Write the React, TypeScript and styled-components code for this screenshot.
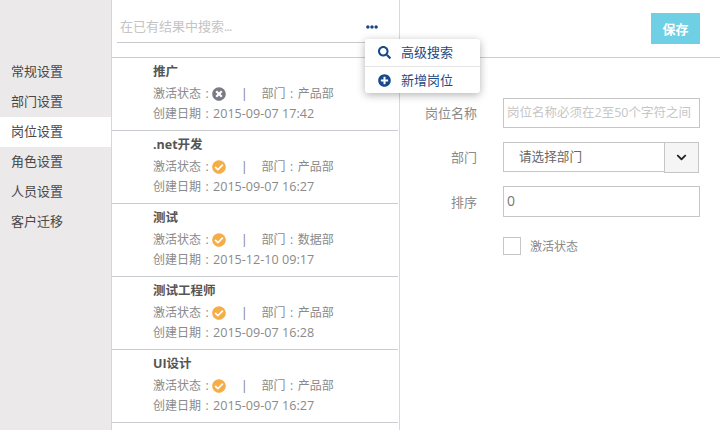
import React from 'react';
import styled, { createGlobalStyle } from 'styled-components';
import { FaCheckCircle, FaChevronDown, FaEllipsisH, FaPlusCircle, FaSearch, FaTimesCircle } from 'react-icons/fa';

const GlobalStyle = createGlobalStyle`
  html, body {
    margin: 0;
    padding: 0;
    height: 100%;
    overflow: hidden;
    background: #fff;
  }
  * {
    box-sizing: border-box;
  }
  body {
    font-family: "Open Sans", "Noto Sans CJK SC", sans-serif;
    font-size: 13px;
    color: #8a8a8a;
  }
`;

const Page = styled.div`
  display: grid;
  grid-template-columns: 112px 288px 1fr;
  width: 720px;
  height: 430px;
  overflow: hidden;
`;

const Sidebar = styled.nav`
  background: #ebe9ea;
  border-right: 1px solid #cfd8e0;
  padding-top: 57px;
`;

const NavItem = styled.div<{ $active?: boolean }>`
  height: 30px;
  line-height: 28px;
  padding-left: 11px;
  color: #484848;
  background: ${props => (props.$active ? '#fff' : 'transparent')};
`;

const ListPanel = styled.section`
  position: relative;
  border-right: 1px solid #d4dbe0;
`;

const SearchBar = styled.div`
  height: 58px;
  padding: 0 0 0 5px;
  border-bottom: 1px solid #c9cdd1;
`;

const SearchRow = styled.div`
  display: flex;
  align-items: center;
  justify-content: space-between;
  height: 43px;
  padding: 9px 21px 0 3px;
  border-bottom: 1px solid #c9c9c9;
`;

const SearchText = styled.span`
  color: #c4c4c4;
  font-size: 13px;
`;

const SearchDots = styled.span`
  letter-spacing: -0.9px;
`;

const MoreButton = styled.span`
  display: flex;
  padding-top: 2px;
  color: #1d4681;
  font-size: 12px;
`;

const Menu = styled.div`
  position: absolute;
  top: 39px;
  left: 253px;
  width: 115px;
  height: 54px;
  background: #fff;
  border-radius: 3px;
  box-shadow: 0 2px 8px rgba(0, 0, 0, 0.3);
  z-index: 2;
`;

const MenuItem = styled.div`
  display: flex;
  align-items: center;
  gap: 10px;
  height: 27px;
  line-height: 25px;
  padding-left: 13px;
  color: #1f4a7f;
  font-size: 13px;

  & + & {
    border-top: 1px solid #e4e4e4;
  }
`;

const Job = styled.article`
  height: 73px;
  padding: 5px 0 0 41px;
  border-bottom: 1px solid #c9cdd1;
  margin-right: 1px;
  line-height: 20.5px;
  font-size: 12px;
`;

const JobTitle = styled.div`
  margin-bottom: 2px;
  color: #555;
  font-weight: 700;
  font-size: 12.5px;
  line-height: 18.5px;
`;

const JobLine = styled.div`
  display: flex;
  align-items: center;
  white-space: nowrap;
`;

const Colon = styled.span`
  width: 12px;
  text-align: center;
`;

const DateText = styled.span`
  font-size: 12.6px;
`;

const StatusIcon = styled.span<{ $on: boolean }>`
  display: flex;
  margin-left: -1px;
  color: ${props => (props.$on ? '#f5ad48' : '#7b7b85')};
  font-size: 14px;
`;

const Divider = styled.span`
  margin: 0 14px 0 15px;
  color: #777;
`;

const FormPanel = styled.section`
  display: flex;
  flex-direction: column;
`;

const TopBar = styled.div`
  display: flex;
  justify-content: flex-end;
  height: 58px;
  padding: 13px 20px 0 0;
  border-bottom: 1px solid #c9d0d4;
`;

const SaveButton = styled.button`
  width: 49px;
  height: 31px;
  padding: 0;
  border: none;
  background: #6fcfe4;
  color: #fff;
  font: inherit;
  font-weight: 700;
`;

const Form = styled.div`
  display: flex;
  flex-direction: column;
  gap: 14px;
  padding-top: 40px;
`;

const Field = styled.div`
  display: grid;
  grid-template-columns: 77px 197px;
  column-gap: 26px;
  align-items: center;
`;

const Label = styled.label`
  text-align: right;
  line-height: 28px;
  color: #8a8a8a;
`;

const TextBox = styled.div<{ $muted?: boolean; $tall?: boolean }>`
  height: ${props => (props.$tall ? '31px' : '30px')};
  line-height: 27px;
  padding-left: 3px;
  border: 1px solid #c6c6c6;
  color: ${props => (props.$muted ? '#c6c6c6' : '#777')};
  white-space: nowrap;
  overflow: hidden;
  font-size: ${props => (props.$muted ? '12.5px' : '14px')};
`;

const SelectWrap = styled.div`
  display: flex;
  align-items: flex-start;
  height: 30px;
`;

const SelectValue = styled.div`
  width: 161px;
  height: 30px;
  line-height: 28px;
  padding-left: 15px;
  border: 1px solid #c6c6c6;
  border-right: none;
  color: #666;
  font-size: 12.6px;
`;

const SelectButton = styled.div`
  display: flex;
  align-items: center;
  justify-content: center;
  flex: none;
  width: 35px;
  height: 31px;
  border: 1px solid #c6c6c6;
  background: #f5f5f5;
  color: #222;
  font-size: 11px;
`;

const CheckField = styled.div`
  display: flex;
  align-items: center;
  gap: 9px;
  margin: 6px 0 0 103px;
  font-size: 12px;
`;

const CheckBox = styled.span`
  width: 18px;
  height: 18px;
  border: 1px solid #c6c6c6;
`;

const navItems = ['常规设置', '部门设置', '岗位设置', '角色设置', '人员设置', '客户迁移'];

const jobs = [
  { title: '推广', on: false, dept: '产品部', date: '2015-09-07 17:42' },
  { title: '.net开发', on: true, dept: '产品部', date: '2015-09-07 16:27' },
  { title: '测试', on: true, dept: '数据部', date: '2015-12-10 09:17' },
  { title: '测试工程师', on: true, dept: '产品部', date: '2015-09-07 16:28' },
  { title: 'UI设计', on: true, dept: '产品部', date: '2015-09-07 16:27' },
];

const App: React.FC = () => {
  return (
    <Page>
      <GlobalStyle />
      <Sidebar>
        {navItems.map(item => (
          <NavItem key={item} $active={item === '岗位设置'}>
            {item}
          </NavItem>
        ))}
      </Sidebar>

      <ListPanel>
        <SearchBar>
          <SearchRow>
            <SearchText>
              在已有结果中搜索<SearchDots>...</SearchDots>
            </SearchText>
            <MoreButton>
              <FaEllipsisH />
            </MoreButton>
          </SearchRow>
        </SearchBar>
        <Menu>
          <MenuItem>
            <FaSearch color="#164a8a" size={13} />
            高级搜索
          </MenuItem>
          <MenuItem>
            <FaPlusCircle color="#164a8a" size={13} />
            新增岗位
          </MenuItem>
        </Menu>
        {jobs.map(job => (
          <Job key={job.title}>
            <JobTitle>{job.title}</JobTitle>
            <JobLine>
              激活状态<Colon>:</Colon>
              <StatusIcon $on={job.on}>{job.on ? <FaCheckCircle /> : <FaTimesCircle />}</StatusIcon>
              <Divider>|</Divider>
              部门<Colon>:</Colon>
              {job.dept}
            </JobLine>
            <JobLine>
              创建日期<Colon>:</Colon>
              <DateText>{job.date}</DateText>
            </JobLine>
          </Job>
        ))}
      </ListPanel>

      <FormPanel>
        <TopBar>
          <SaveButton>保存</SaveButton>
        </TopBar>
        <Form>
          <Field>
            <Label>岗位名称</Label>
            <TextBox $muted>岗位名称必须在2至50个字符之间</TextBox>
          </Field>
          <Field>
            <Label>部门</Label>
            <SelectWrap>
              <SelectValue>请选择部门</SelectValue>
              <SelectButton>
                <FaChevronDown />
              </SelectButton>
            </SelectWrap>
          </Field>
          <Field>
            <Label>排序</Label>
            <TextBox $tall>0</TextBox>
          </Field>
          <CheckField>
            <CheckBox />
            激活状态
          </CheckField>
        </Form>
      </FormPanel>
    </Page>
  );
};

export default App;
